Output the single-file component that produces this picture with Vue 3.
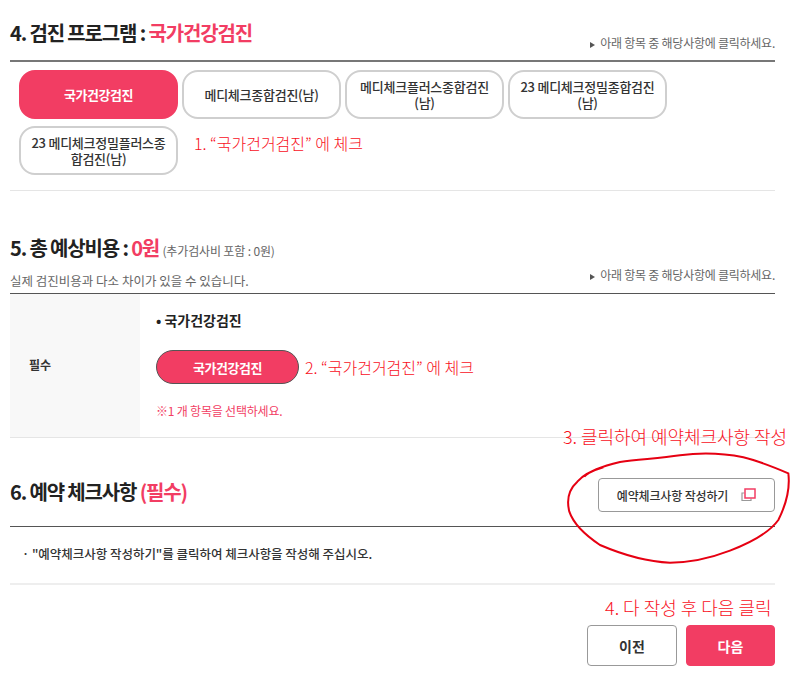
<script setup>
const programs = [
  { label: '국가건강검진', active: true },
  { label: '메디체크종합검진(남)' },
  { label: '메디체크플러스종합검진(남)' },
  { label: '23 메디체크정밀종합검진(남)' },
  { label: '23 메디체크정밀플러스종합검진(남)' },
];

const hint = '아래 항목 중 해당사항에 클릭하세요.';
</script>

<template>
  <div class="page">
    <section class="program">
      <div class="head head--program">
        <h2 class="title">4. 검진 프로그램 : <em>국가건강검진</em></h2>
        <p class="hint"><i class="hint__arrow"></i>{{ hint }}</p>
      </div>
      <div class="program__list">
        <button
          v-for="item in programs"
          :key="item.label"
          class="program__btn"
          :class="{ 'is-active': item.active }"
        >{{ item.label }}</button>
      </div>
    </section>

    <section class="cost">
      <h2 class="title">5. 총 예상비용 : <em>0원</em> <small>(추가검사비 포함 : 0원)</small></h2>
      <div class="cost__sub">
        <p>실제 검진비용과 다소 차이가 있을 수 있습니다.</p>
        <p class="hint"><i class="hint__arrow"></i>{{ hint }}</p>
      </div>
      <div class="cost__table">
        <div class="cost__label">필수</div>
        <div class="cost__body">
          <p class="cost__name">• 국가건강검진</p>
          <button class="cost__btn">국가건강검진</button>
          <p class="cost__note">※1 개 항목을 선택하세요.</p>
        </div>
      </div>
    </section>

    <section class="check">
      <div class="head head--check">
        <h2 class="title">6. 예약 체크사항 <em>(필수)</em></h2>
        <button class="check__btn">
          예약체크사항 작성하기
          <svg width="15" height="14" viewBox="0 0 15 14" fill="none">
            <path d="M3.5 5H1v7.5h9V10.5" stroke="#999" stroke-width="1.2" />
            <rect x="4" y="1" width="10" height="9" stroke="#f23d63" stroke-width="1.5" />
          </svg>
        </button>
      </div>
      <p class="check__note">· "예약체크사항 작성하기"를 클릭하여 체크사항을 작성해 주십시오.</p>
    </section>

    <div class="actions">
      <button class="actions__btn">이전</button>
      <button class="actions__btn is-next">다음</button>
    </div>

    <span class="memo memo--one">1. “국가건거검진” 에 체크</span>
    <span class="memo memo--two">2. “국가건거검진” 에 체크</span>
    <span class="memo memo--three">3. 클릭하여 예약체크사항 작성</span>
    <span class="memo memo--four">4. 다 작성 후 다음 클릭</span>
    <svg class="scribble" viewBox="0 0 780 450" fill="none">
      <path
        d="M133 170 C150 150 190 138 240 126 C300 118 360 115 420 106 C480 98 550 100 610 112 C660 124 710 145 745 160 C750 200 740 250 715 300 C690 335 640 365 570 392 C510 415 450 428 390 428 C320 425 250 405 180 375 C135 345 100 310 88 275 C78 235 90 205 112 185 C125 170 145 155 190 142"
        stroke="#e60012"
        stroke-width="6"
      />
    </svg>
  </div>
</template>

<style>
html,
body {
  margin: 0;
  background: #fff;
}
</style>

<style scoped>
.page {
  position: relative;
  box-sizing: border-box;
  width: 800px;
  height: 694px;
  padding: 0 25px 0 10px;
  overflow: hidden;
  font-family: "Noto Sans CJK KR", "Noto Sans", sans-serif;
  color: #333;
}

p {
  margin: 0;
}

button {
  font-family: inherit;
  cursor: pointer;
}

.head {
  display: flex;
  justify-content: space-between;
}

.title {
  margin: 0;
  font-size: 20px;
  line-height: 28px;
  font-weight: 700;
  letter-spacing: -1.15px;
  color: #222;
}

.title em {
  font-style: normal;
  color: #f23d63;
}

.title small {
  font-size: 12px;
  font-weight: 400;
  letter-spacing: -0.15px;
  color: #666;
}

.hint {
  font-size: 12px;
  line-height: 18px;
  letter-spacing: -0.25px;
  color: #666;
}

.hint__arrow {
  display: inline-block;
  margin-right: 5px;
  border-left: 5px solid #555;
  border-top: 3.5px solid transparent;
  border-bottom: 3.5px solid transparent;
}

.head--program {
  box-sizing: border-box;
  height: 62px;
  padding-top: 19px;
  border-bottom: 2px solid #777;
}

.head--program .hint {
  margin-top: 15px;
}

.program {
  height: 191px;
  box-sizing: border-box;
  border-bottom: 1px solid #e5e5e5;
}

.program__list {
  display: flex;
  flex-wrap: wrap;
  gap: 7px 4px;
  padding: 8px 0 0 9px;
}

.program__btn {
  box-sizing: border-box;
  width: 159px;
  height: 49px;
  padding: 0 10px;
  background: #fff;
  border: 2px solid #cfcfcf;
  border-radius: 16px;
  font-size: 13px;
  line-height: 16px;
  font-weight: 500;
  letter-spacing: -0.25px;
  color: #333;
}

.program__btn.is-active {
  background: #f23d63;
  border-color: #f23d63;
  color: #fff;
  font-weight: 700;
  letter-spacing: -0.45px;
}

.cost {
  padding-top: 43px;
}

.cost__sub {
  display: flex;
  justify-content: space-between;
  align-items: flex-end;
  box-sizing: border-box;
  height: 29px;
  padding-bottom: 3px;
  border-bottom: 1px solid #555;
  font-size: 12.5px;
  color: #666;
}

.cost__sub .hint {
  margin-bottom: 6px;
}

.cost__table {
  display: flex;
  height: 144px;
  box-sizing: border-box;
  border-bottom: 1px solid #e5e5e5;
}

.cost__label {
  display: flex;
  align-items: center;
  width: 130px;
  padding: 0 0 2px 19px;
  box-sizing: border-box;
  background: #f8f8f8;
  font-size: 12px;
  font-weight: 700;
  color: #333;
}

.cost__body {
  padding: 16px 0 0 16px;
}

.cost__name {
  font-size: 14px;
  line-height: 20px;
  font-weight: 700;
  color: #222;
}

.cost__btn {
  display: block;
  width: 143px;
  height: 34px;
  margin-top: 20px;
  background: #f23d63;
  border: 1px solid #555;
  border-radius: 17px;
  font-size: 13px;
  font-weight: 700;
  letter-spacing: -0.45px;
  color: #fff;
}

.cost__note {
  margin-top: 18px;
  font-size: 12px;
  line-height: 18px;
  letter-spacing: -0.2px;
  color: #f23d63;
}

.head--check {
  box-sizing: border-box;
  height: 89px;
  padding-top: 40px;
  border-bottom: 1px solid #555;
}

.check__btn {
  display: flex;
  align-items: center;
  justify-content: center;
  gap: 13px;
  box-sizing: border-box;
  width: 177px;
  height: 34px;
  background: #fff;
  border: 1px solid #999;
  border-radius: 4px;
  font-size: 12px;
  font-weight: 500;
  letter-spacing: -0.15px;
  color: #333;
}

.check__note {
  box-sizing: border-box;
  height: 58px;
  padding: 17px 0 0 12px;
  border-bottom: 2px solid #eee;
  font-size: 12.5px;
  line-height: 20px;
  font-weight: 500;
  letter-spacing: -0.03px;
  color: #333;
}

.actions {
  display: flex;
  justify-content: flex-end;
  gap: 9px;
  padding-top: 40px;
}

.actions__btn {
  box-sizing: border-box;
  width: 90px;
  height: 41px;
  background: #fff;
  border: 1px solid #999;
  border-radius: 4px;
  font-size: 14px;
  font-weight: 700;
  color: #333;
}

.actions__btn.is-next {
  width: 89px;
  background: #f23d63;
  border-color: #f23d63;
  color: #fff;
}

/* 스크린샷 위에 손으로 적은 빨간 메모 */
.memo {
  position: absolute;
  font-size: 16px;
  line-height: 22px;
  font-weight: 300;
  color: #f80f1c;
  white-space: nowrap;
}

.memo--one {
  left: 194px;
  top: 132px;
}

.memo--two {
  left: 305px;
  top: 356px;
}

.memo--three {
  left: 563px;
  top: 425px;
  font-size: 18px;
  letter-spacing: -0.05px;
}

.memo--four {
  left: 605px;
  top: 596px;
  font-size: 18px;
}

.scribble {
  position: absolute;
  left: 540px;
  top: 420px;
  width: 260px;
  height: 150px;
}
</style>
